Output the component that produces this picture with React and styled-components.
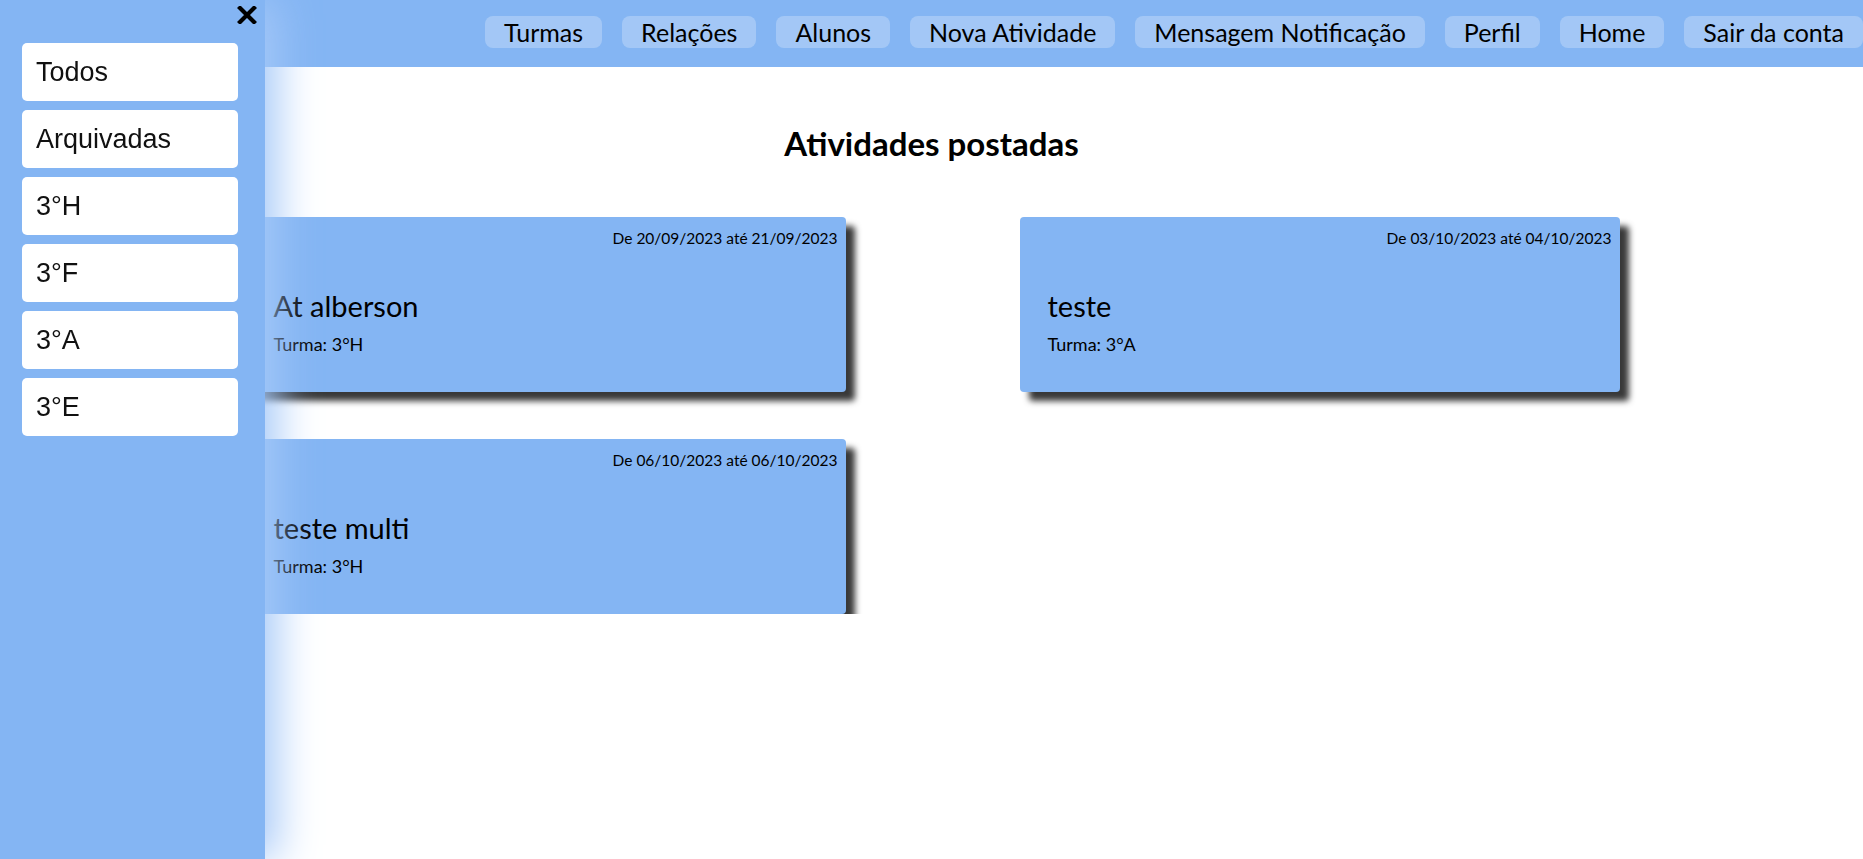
import React from "react";
import styled, { createGlobalStyle } from "styled-components";

const GlobalStyle = createGlobalStyle`
  body {
    margin: 0;
    background: #ffffff;
    font-family: "Gill Sans", Lato, "Noto Sans", sans-serif;
  }
`;

const BLUE = "#84b5f3";

// Top navigation bar
const Header = styled.header`
  height: 67px;
  background: ${BLUE};
  display: flex;
  justify-content: flex-end;
  align-items: flex-start;
  padding-top: 16px;
  box-sizing: border-box;
  overflow: hidden;
`;

const NavList = styled.nav`
  display: flex;
  gap: 20px;
`;

const NavButton = styled.a`
  display: flex;
  align-items: center;
  height: 32px;
  padding: 0 19px;
  border-radius: 8px;
  background: rgba(255, 255, 255, 0.25);
  color: #000;
  font-size: 25px;
  white-space: nowrap;
  cursor: pointer;
`;

// Side drawer with the class filters
const Drawer = styled.aside`
  position: fixed;
  top: 0;
  left: 0;
  width: 265px;
  height: 100vh;
  background: ${BLUE};
  box-shadow: 12px 0 40px 0 rgba(165, 200, 248, 1);
  padding: 43px 0 0 22px;
  box-sizing: border-box;
  display: flex;
  flex-direction: column;
  gap: 9px;
  z-index: 10;
`;

const CloseButton = styled.button`
  position: absolute;
  top: 6px;
  left: 237px;
  width: 20px;
  height: 18px;
  padding: 0;
  border: none;
  background: none;
  cursor: pointer;
  display: flex;
`;

const DrawerItem = styled.div`
  width: 216px;
  height: 58px;
  background: #ffffff;
  border-radius: 5px;
  display: flex;
  align-items: center;
  padding-left: 14px;
  box-sizing: border-box;
  font-family: "Liberation Sans", Arial, sans-serif;
  font-size: 27px;
  color: #111;
  cursor: pointer;
`;

const Main = styled.main`
  display: flex;
  flex-direction: column;
  align-items: center;
`;

const Title = styled.h2`
  margin: 57px 0 0;
  font-size: 33px;
  line-height: 38px;
  font-weight: 700;
  color: #000;
`;

const CardGrid = styled.div`
  width: 1374px;
  margin: 55px 0 0 2px;
  display: grid;
  grid-template-columns: 600px 600px;
  justify-content: space-between;
  row-gap: 47px;
`;

const Card = styled.div`
  height: 175px;
  background: ${BLUE};
  border-radius: 4px;
  box-shadow: 9px 9px 6px rgba(0, 0, 0, 0.78);
  padding: 11px 8px 0 28px;
  box-sizing: border-box;
  color: #000;
`;

const CardDate = styled.div`
  text-align: right;
  font-size: 15.5px;
  line-height: 20px;
`;

const CardTitle = styled.div`
  margin-top: 41px;
  font-size: 29px;
  line-height: 34px;
`;

const CardClass = styled.div`
  margin-top: 10px;
  font-size: 18px;
  line-height: 22px;
`;

const CloseIcon = () => (
  <svg width="20" height="18" viewBox="0 0 20 18">
    <path d="M3 2 L17 16 M17 2 L3 16" stroke="#000" strokeWidth="4.2" strokeLinecap="square" />
  </svg>
);

const navItems = [
  "Turmas",
  "Relações",
  "Alunos",
  "Nova Atividade",
  "Mensagem Notificação",
  "Perfil",
  "Home",
  "Sair da conta",
];

const filters = ["Todos", "Arquivadas", "3°H", "3°F", "3°A", "3°E"];

const activities = [
  { id: 1, title: "At alberson", turma: "3°H", start: "20/09/2023", end: "21/09/2023" },
  { id: 2, title: "teste", turma: "3°A", start: "03/10/2023", end: "04/10/2023" },
  { id: 3, title: "teste multi", turma: "3°H", start: "06/10/2023", end: "06/10/2023" },
];

const App = () => (
  <>
    <GlobalStyle />
    <Drawer>
      <CloseButton aria-label="Fechar">
        <CloseIcon />
      </CloseButton>
      {filters.map((f) => (
        <DrawerItem key={f}>{f}</DrawerItem>
      ))}
    </Drawer>
    <Header>
      <NavList>
        {navItems.map((item) => (
          <NavButton key={item}>{item}</NavButton>
        ))}
      </NavList>
    </Header>
    <Main>
      <Title>Atividades postadas</Title>
      <CardGrid>
        {activities.map((a) => (
          <Card key={a.id}>
            <CardDate>
              De {a.start} até {a.end}
            </CardDate>
            <CardTitle>{a.title}</CardTitle>
            <CardClass>Turma: {a.turma}</CardClass>
          </Card>
        ))}
      </CardGrid>
    </Main>
  </>
);

export default App;
